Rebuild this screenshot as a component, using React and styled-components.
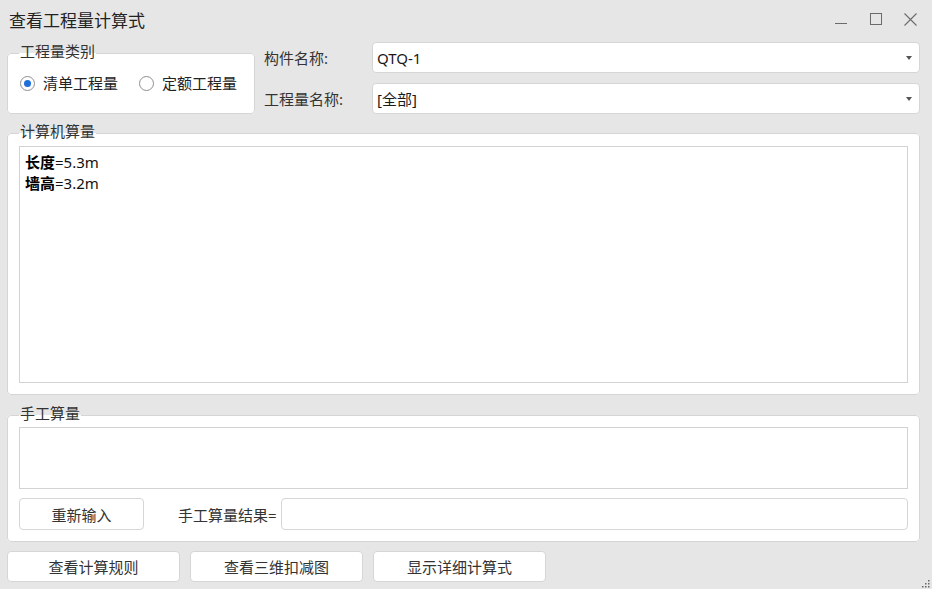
import React from 'react'
import styled, { createGlobalStyle } from 'styled-components'

const GlobalStyle = createGlobalStyle`
  html, body {
    margin: 0;
    padding: 0;
    background: #e6e6e6;
  }
  body {
    font-family: "Noto Sans", "Noto Sans CJK SC", sans-serif;
  }
  * { box-sizing: border-box; }
`

const Window = styled.div`
  position: relative;
  width: 932px;
  height: 589px;
  overflow: hidden;
  display: flex;
  flex-direction: column;
  background: #e6e6e6;
  color: #333;
  font-size: 15px;
`

const TitleBar = styled.div`
  height: 38px;
  display: flex;
  align-items: center;
  justify-content: space-between;
  padding: 0 4px 0 9px;
`

const Title = styled.div`
  font-size: 17px;
  color: #222;
`

const Controls = styled.div`
  display: flex;
  height: 100%;
`

const ControlButton = styled.div`
  width: 35px;
  height: 100%;
  display: flex;
  align-items: center;
  justify-content: center;
  color: #6b6b6b;
`

const Content = styled.div`
  display: flex;
  flex-direction: column;
  padding: 4px 12px 0 7px;
`

const TopRow = styled.div`
  display: flex;
  align-items: flex-start;
  gap: 9px;
`

const Group = styled.fieldset`
  margin: ${p => p.$top || 0}px 0 0;
  min-width: 0;
  border: 1px solid #d5d5d5;
  border-radius: 4px;
  background: #fff;
  padding: ${p => p.$pad || '0 11px 11px'};
  width: ${p => p.$width ? `${p.$width}px` : 'auto'};
  height: ${p => p.$height ? `${p.$height}px` : 'auto'};
`

const Legend = styled.legend`
  padding: 0 1px 4px;
  margin: 0;
  font-size: 15px;
  line-height: 16px;
  color: #333;
`

const RadioRow = styled.div`
  display: flex;
  align-items: center;
  gap: 21px;
  height: 40px;
  padding-left: 1px;
`

const RadioItem = styled.label`
  display: flex;
  align-items: center;
  gap: 8px;
  color: #222;
  line-height: 18px;
`

const RadioCircle = styled.span`
  flex-shrink: 0;
  width: 15px;
  height: 15px;
  border-radius: 50%;
  border: 1px solid #8f8f8f;
  background: #fff;
  display: flex;
  align-items: center;
  justify-content: center;

  &::after {
    content: '';
    width: 7px;
    height: 7px;
    border-radius: 50%;
    background: ${p => p.$checked ? '#1f70d8' : 'transparent'};
  }
`

const FieldGrid = styled.div`
  flex: 1;
  display: grid;
  grid-template-columns: 108px 1fr;
  row-gap: 10px;
  align-items: center;
`

const FieldLabel = styled.div`
  color: #333;
`

const Combo = styled.div`
  height: 31px;
  border: 1px solid #d6d6d6;
  border-radius: 4px;
  background: #fff;
  display: flex;
  align-items: center;
  justify-content: space-between;
  padding: 0 7px 0 4px;
  color: #1a1a1a;
`

const Arrow = styled.span`
  width: 0;
  height: 0;
  border-left: 3px solid transparent;
  border-right: 3px solid transparent;
  border-top: 4px solid #555;
`

const TextBox = styled.div`
  height: ${p => p.$height}px;
  border: 1px solid #d3d3d3;
  background: #fff;
  padding: 5px 5px;
  line-height: 21px;
  color: #111;
`

const Line = styled.div`
  white-space: nowrap;
`

const Name = styled.span`
  font-weight: 700;
  color: #000;
`

const ManualRow = styled.div`
  display: flex;
  align-items: center;
  margin-top: 9px;
`

const Button = styled.div`
  width: ${p => p.$width}px;
  height: ${p => p.$height || 31}px;
  border: 1px solid #d6d6d6;
  border-radius: 4px;
  background: #fff;
  display: flex;
  align-items: center;
  justify-content: center;
  color: #333;
`

const ResultLabel = styled.div`
  margin: 0 4px 0 34px;
  color: #333;
`

const ResultInput = styled.div`
  flex: 1;
  height: 32px;
  border: 1px solid #d6d6d6;
  border-radius: 4px;
  background: #fff;
`

const BottomBar = styled.div`
  display: flex;
  gap: 10px;
  margin-top: 9px;
`

const Grip = styled.svg`
  position: absolute;
  right: 2px;
  bottom: 1px;
`

const results = [
  { name: '长度', value: '=5.3m' },
  { name: '墙高', value: '=3.2m' },
]

export default function App() {
  return (
    <>
      <GlobalStyle />
      <Window>
        <TitleBar>
          <Title>查看工程量计算式</Title>
          <Controls>
            <ControlButton>
              <svg width="12" height="12" viewBox="0 0 12 12">
                <path d="M0 10.5h12" stroke="currentColor" strokeWidth="1" />
              </svg>
            </ControlButton>
            <ControlButton>
              <svg width="12" height="12" viewBox="0 0 12 12">
                <rect x="0.5" y="0.5" width="11" height="11" fill="none" stroke="currentColor" strokeWidth="1" />
              </svg>
            </ControlButton>
            <ControlButton>
              <svg width="13" height="13" viewBox="0 0 13 13">
                <path d="M0.5 0.5l12 12M12.5 0.5l-12 12" stroke="currentColor" strokeWidth="1.1" />
              </svg>
            </ControlButton>
          </Controls>
        </TitleBar>
        <Content>
          <TopRow>
            <Group $width={248} $height={71} $top={1} $pad="0 11px 0 11px">
              <Legend>工程量类别</Legend>
              <RadioRow>
                <RadioItem><RadioCircle $checked />清单工程量</RadioItem>
                <RadioItem><RadioCircle />定额工程量</RadioItem>
              </RadioRow>
            </Group>
            <FieldGrid>
              <FieldLabel>构件名称:</FieldLabel>
              <Combo><span>QTQ-1</span><Arrow /></Combo>
              <FieldLabel>工程量名称:</FieldLabel>
              <Combo><span>[全部]</span><Arrow /></Combo>
            </FieldGrid>
          </TopRow>
          <Group $top={9} $pad="3px 11px 11px">
            <Legend>计算机算量</Legend>
            <TextBox $height={237}>
              {results.map(r => (
                <Line key={r.name}><Name>{r.name}</Name>{r.value}</Line>
              ))}
            </TextBox>
          </Group>
          <Group $top={10} $pad="2px 11px 11px">
            <Legend>手工算量</Legend>
            <TextBox $height={62} />
            <ManualRow>
              <Button $width={125} $height={32}>重新输入</Button>
              <ResultLabel>手工算量结果=</ResultLabel>
              <ResultInput />
            </ManualRow>
          </Group>
          <BottomBar>
            <Button $width={173}>查看计算规则</Button>
            <Button $width={173}>查看三维扣减图</Button>
            <Button $width={173}>显示详细计算式</Button>
          </BottomBar>
        </Content>
        <Grip width="9" height="9" viewBox="0 0 9 9">
          {[[7, 1], [4, 4], [7, 4], [1, 7], [4, 7], [7, 7]].map(([x, y]) => (
            <rect key={`${x}-${y}`} x={x} y={y} width="1.5" height="1.5" fill="#666" />
          ))}
        </Grip>
      </Window>
    </>
  )
}
